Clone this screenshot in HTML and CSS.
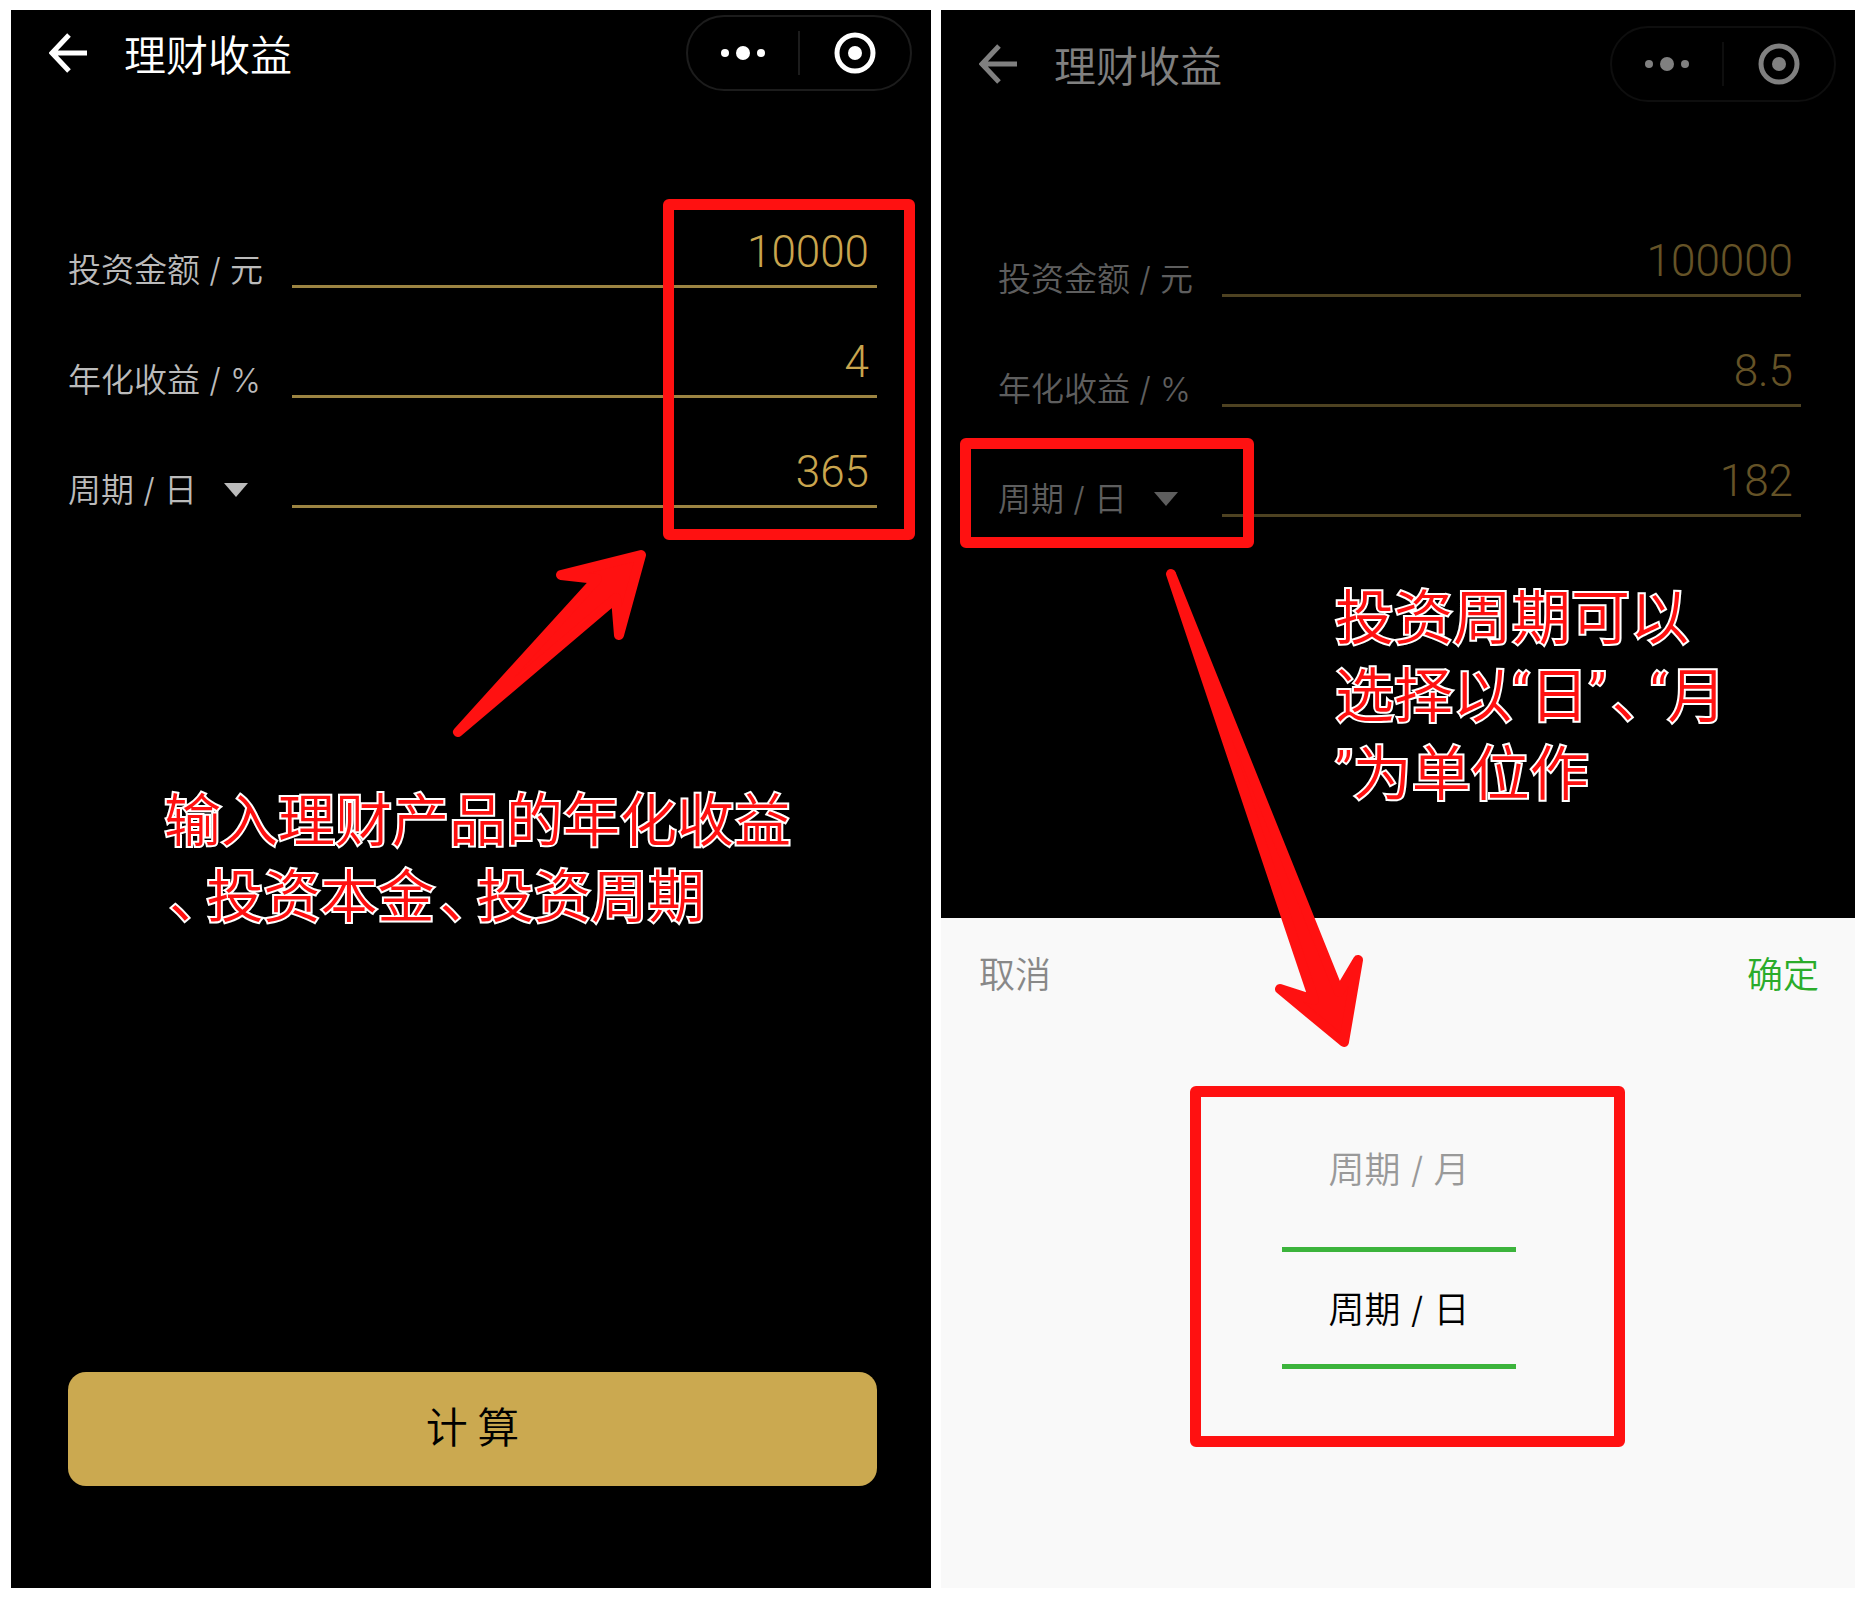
FILE: index.html
```html
<!DOCTYPE html>
<html lang="zh-CN">
<head>
<meta charset="utf-8">
<meta name="viewport" content="width=device-width, initial-scale=1">
<title>理财收益</title>
<link rel="stylesheet" href="styles.css">
</head>
<body>
<main class="board">
  <section class="screen">
    <header class="topbar">
      <button class="icon-button" type="button" aria-label="返回">
        <svg width="38" height="40" viewBox="0 0 38 40"><path d="M38 20H4M20 2L3 20L20 38" fill="none" stroke="currentColor" stroke-width="5"/></svg>
      </button>
      <h1 class="title">理财收益</h1>
      <div class="capsule">
        <button class="icon-button" type="button" aria-label="更多">
          <svg width="46" height="16" viewBox="0 0 46 16" fill="currentColor"><circle cx="5" cy="8" r="4"/><circle cx="23" cy="8" r="7"/><circle cx="41" cy="8" r="4"/></svg>
        </button>
        <span class="capsule-divider"></span>
        <button class="icon-button" type="button" aria-label="关闭">
          <svg width="42" height="42" viewBox="0 0 42 42"><circle cx="21" cy="21" r="18" fill="none" stroke="currentColor" stroke-width="5"/><circle cx="21" cy="21" r="7" fill="currentColor"/></svg>
        </button>
      </div>
    </header>

    <form class="form">
      <div class="row">
        <label class="label" for="amount-a">投资金额 / 元</label>
        <input class="value" id="amount-a" type="text" inputmode="decimal" value="10000">
      </div>
      <div class="row">
        <label class="label" for="rate-a">年化收益 / %</label>
        <input class="value" id="rate-a" type="text" inputmode="decimal" value="4">
      </div>
      <div class="row">
        <div class="unit">
          <select class="label unit-select" aria-label="周期单位"><option>周期 / 日</option><option>周期 / 月</option></select>
          <svg class="caret" width="24" height="14" viewBox="0 0 24 14"><path d="M0 0H24L12 14Z" fill="currentColor"/></svg>
        </div>
        <input class="value" type="text" inputmode="numeric" aria-label="周期" value="365">
      </div>
      <span class="frame frame-values"></span>
    </form>

    <p class="note note-input">输入理财产品的年化收益<br><span class="comma">、</span>投资本金<span class="comma">、</span>投资周期</p>
    <svg class="arrow arrow-input" width="200" height="196" viewBox="450 546 200 196"><path d="M458 732L597 579L561 575L641 555L619 635L616 598Z"/></svg>

    <button class="submit" type="button">计 算</button>
  </section>

  <section class="screen screen-picker">
    <header class="topbar dimmed">
      <button class="icon-button" type="button" aria-label="返回">
        <svg width="38" height="40" viewBox="0 0 38 40"><path d="M38 20H4M20 2L3 20L20 38" fill="none" stroke="currentColor" stroke-width="5"/></svg>
      </button>
      <h2 class="title">理财收益</h2>
      <div class="capsule">
        <button class="icon-button" type="button" aria-label="更多">
          <svg width="46" height="16" viewBox="0 0 46 16" fill="currentColor"><circle cx="5" cy="8" r="4"/><circle cx="23" cy="8" r="7"/><circle cx="41" cy="8" r="4"/></svg>
        </button>
        <span class="capsule-divider"></span>
        <button class="icon-button" type="button" aria-label="关闭">
          <svg width="42" height="42" viewBox="0 0 42 42"><circle cx="21" cy="21" r="18" fill="none" stroke="currentColor" stroke-width="5"/><circle cx="21" cy="21" r="7" fill="currentColor"/></svg>
        </button>
      </div>
    </header>

    <form class="form form-picker">
      <div class="row dimmed">
        <label class="label" for="amount-b">投资金额 / 元</label>
        <input class="value" id="amount-b" type="text" inputmode="decimal" value="100000">
      </div>
      <div class="row dimmed">
        <label class="label" for="rate-b">年化收益 / %</label>
        <input class="value" id="rate-b" type="text" inputmode="decimal" value="8.5">
      </div>
      <div class="row dimmed">
        <div class="unit">
          <select class="label unit-select" aria-label="周期单位"><option>周期 / 日</option><option>周期 / 月</option></select>
          <svg class="caret" width="24" height="14" viewBox="0 0 24 14"><path d="M0 0H24L12 14Z" fill="currentColor"/></svg>
        </div>
        <input class="value" type="text" inputmode="numeric" aria-label="周期" value="182">
      </div>
      <span class="frame frame-unit"></span>
    </form>

    <p class="note note-unit">投资周期可以<br>选择以“日”<span class="comma">、</span>“月<br>”为单位作</p>

    <div class="sheet">
      <div class="sheet-actions">
        <button class="action" type="button">取消</button>
        <button class="action action-confirm" type="button">确定</button>
      </div>
      <div class="wheel">
        <button class="option" type="button">周期 / 月</button>
        <button class="option option-selected" type="button" aria-pressed="true">周期 / 日</button>
        <span class="frame frame-wheel"></span>
      </div>
    </div>
    <svg class="arrow arrow-unit" width="204" height="486" viewBox="1164 566 204 486"><path d="M1171 574L1314 1000L1280 989L1344 1042L1358 960L1339 992Z"/></svg>
  </section>
</main>
</body>
</html>
```
FILE: styles.css
```css
* {
  box-sizing: border-box;
}

body {
  margin: 0;
  background: #fff;
  font-family: "Noto Sans CJK SC", sans-serif;
}

button,
input,
select {
  margin: 0;
  padding: 0;
  border: 0;
  background: none;
  color: inherit;
  font: inherit;
}

.board {
  display: grid;
  grid-template-columns: 920fr 914fr;
  gap: 10px;
  min-height: 100vh;
  padding: 10px 10px 10px 11px;
}

.screen {
  position: relative;
  display: flex;
  flex-direction: column;
  padding: 5px 0 102px;
  background: #000;
  color: #fff;
}

.screen-picker {
  padding: 16px 0 0;
}

.dimmed {
  opacity: 0.5;
}

/* Title bar */
.topbar {
  display: flex;
  align-items: center;
  padding: 0 19px 0 38px;
}

.icon-button {
  display: flex;
  align-items: center;
  justify-content: center;
}

.title {
  flex: 1;
  margin: 0 0 0 37px;
  font-size: 42px;
  line-height: 58px;
  font-weight: 350;
}

.capsule {
  display: grid;
  grid-template-columns: 1fr 2px 1fr;
  align-items: center;
  width: 226px;
  height: 76px;
  border: 2px solid #1c1c1c;
  border-radius: 38px;
}

.capsule-divider {
  height: 44px;
  background: #1c1c1c;
}

/* Calculator form */
.form {
  position: relative;
  margin-top: 87px;
  padding: 0 54px 0 57px;
}

.form-picker {
  margin-top: 85px;
}

.row {
  display: grid;
  grid-template-columns: 224px 1fr;
  align-items: end;
  height: 110px;
}

.label {
  color: #bbb;
  font-family: Inter, "Noto Sans CJK SC", sans-serif;
  font-size: 33px;
  font-weight: 350;
  line-height: 36px;
}

.unit {
  display: flex;
  align-items: center;
  gap: 26px;
  color: #bbb;
}

.unit-select {
  appearance: none;
}

.value {
  width: 100%;
  height: 70px;
  padding-right: 8px;
  border-bottom: 3px solid #9c8442;
  color: #c9a54e;
  font-family: Roboto, sans-serif;
  font-size: 44px;
  font-weight: 300;
  text-align: right;
}

.submit {
  height: 114px;
  margin: auto 54px 0 57px;
  padding-bottom: 10px;
  border-radius: 18px;
  background: #cba950;
  color: #000;
  font-size: 42px;
  font-weight: 350;
}

/* Bottom sheet */
.sheet {
  margin-top: auto;
  padding: 28px 36px 219px 38px;
  background: #f9f9f9;
}

.sheet-actions {
  display: flex;
  justify-content: space-between;
}

.action {
  color: #888;
  font-size: 36px;
  font-weight: 350;
  line-height: 52px;
}

.action-confirm {
  color: #2aac2a;
}

.wheel {
  position: relative;
  display: flex;
  flex-direction: column;
  align-items: center;
  gap: 51px;
  margin-top: 146px;
}

.option {
  width: 234px;
  color: #999;
  font-family: Inter, "Noto Sans CJK SC", sans-serif;
  font-size: 36px;
  font-weight: 350;
  line-height: 52px;
}

.option-selected {
  padding: 32px 0 28px;
  border: solid #3cb43c;
  border-width: 5px 0;
  color: #000;
}

/* Red annotations over the screens */
.frame {
  position: absolute;
  border: 11px solid #ff1111;
  border-radius: 6px;
  pointer-events: none;
}

.frame-values {
  top: 21px;
  right: 16px;
  width: 252px;
  height: 341px;
}

.frame-unit {
  top: 251px;
  left: 19px;
  width: 294px;
  height: 110px;
}

.frame-wheel {
  top: -58px;
  left: calc(50% - 209px);
  width: 435px;
  height: 361px;
}

.arrow {
  position: absolute;
  fill: #ff1111;
  stroke: #ff1111;
  stroke-width: 10px;
  stroke-linejoin: round;
  pointer-events: none;
}

.arrow-input {
  top: 536px;
  left: 439px;
}

.arrow-unit {
  top: 556px;
  left: 223px;
}

.note {
  margin: 0;
  color: #ff1111;
  font-family: Roboto, "Noto Sans CJK SC", sans-serif;
  font-weight: 350;
  -webkit-text-stroke: 4px #fff;
  paint-order: stroke fill;
}

.note-input {
  margin: 276px 0 0 153px;
  font-size: 57px;
  line-height: 76px;
}

.note-unit {
  margin: 63px 0 0 394px;
  font-size: 59px;
  line-height: 78px;
}

/* Half-width form of the enumeration comma */
.comma {
  margin: 0 9px 0 5px;
  font-feature-settings: "halt";
}
```
